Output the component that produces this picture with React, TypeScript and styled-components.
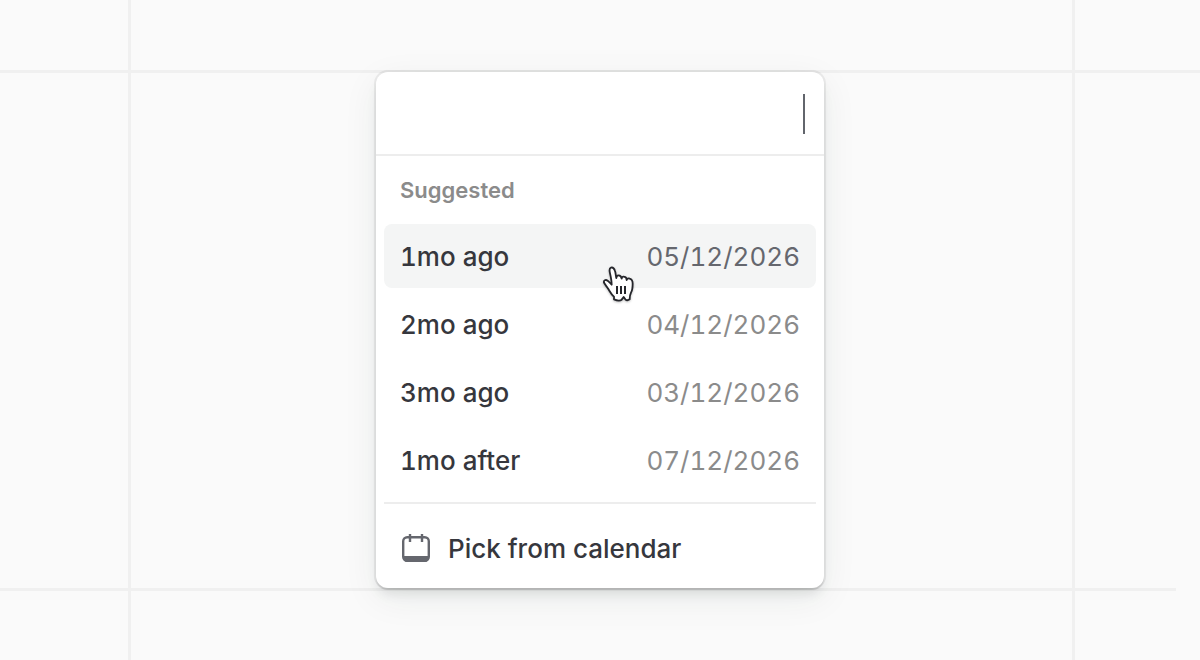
import React from "react";
import styled, { createGlobalStyle } from "styled-components";

const GlobalStyle = createGlobalStyle`
  *, *::before, *::after { box-sizing: border-box; }
  body {
    margin: 0;
    background: #fafafa;
    font-family: Inter, "Liberation Sans", sans-serif;
    -webkit-font-smoothing: antialiased;
  }
`;

const Page = styled.main`
  min-height: 100vh;
  padding: 70px 0 68px;
  background:
    linear-gradient(#f0f0f0, #f0f0f0) left 128px top / 3px 100% no-repeat,
    linear-gradient(#f0f0f0, #f0f0f0) right 125px top / 3px 100% no-repeat,
    #fafafa;
`;

const Band = styled.div`
  display: flex;
  justify-content: center;
  padding: 2px 0 3px;
  background:
    linear-gradient(#f0f0f0, #f0f0f0) left top / 100% 3px no-repeat,
    linear-gradient(#f0f0f0, #f0f0f0) left bottom / calc(100% - 24px) 3px no-repeat;
`;

const Card = styled.section`
  width: 448px;
  max-width: 100%;
  border-radius: 12px;
  background: #fff;
  box-shadow:
    0 0 0 2px rgba(0, 0, 0, 0.06),
    0 2px 1px rgba(0, 0, 0, 0.09),
    0 8px 12px -2px rgba(0, 0, 0, 0.09),
    0 10px 36px rgba(20, 50, 40, 0.07);
`;

const Field = styled.label`
  display: flex;
  align-items: center;
  height: 84px;
  padding: 2px 19px 0 24px;
  border-bottom: 2px solid #ededed;
`;

const DateInput = styled.input`
  flex: 1;
  min-width: 0;
  border: 0;
  outline: 0;
  padding: 0;
  background: transparent;
  color: #2f3037;
  font: 400 26px/32px Inter, sans-serif;
  text-align: right;
`;

const Caret = styled.span`
  width: 2px;
  height: 40px;
  background: #62656c;
`;

const Heading = styled.h2`
  margin: 0;
  padding: 18px 24px;
  color: #8b8b8b;
  font-size: 22px;
  line-height: 32px;
  font-weight: 600;
`;

const List = styled.ul`
  display: flex;
  flex-direction: column;
  gap: 4px;
  margin: 0;
  padding: 0 8px 10px;
  list-style: none;
`;

const Item = styled.li`
  position: relative;
`;

const Row = styled.button<{ $active?: boolean }>`
  display: flex;
  align-items: center;
  gap: 16px;
  width: 100%;
  height: 64px;
  padding: 2px 16px 0;
  border: 0;
  border-radius: 8px;
  background: ${(p) => (p.$active ? "#f4f5f5" : "transparent")};
  color: #36373d;
  font: 500 26px/32px Inter, sans-serif;
  font-variant-numeric: tabular-nums;
  text-align: left;
  cursor: pointer;
`;

const DateText = styled.time<{ $active?: boolean }>`
  margin-left: auto;
  color: ${(p) => (p.$active ? "#65676e" : "#8b8b8b")};
  font-weight: 400;
`;

const Footer = styled.div`
  margin: 0 8px;
  padding: 12px 0 8px;
  border-top: 2px solid #ededed;
`;

const Pointer = styled.svg`
  position: absolute;
  left: 218px;
  top: 41px;
  pointer-events: none;
  filter: drop-shadow(0 1px 1px rgba(0, 0, 0, 0.25));
`;

const CalendarIcon = () => (
  <svg width="32" height="32" viewBox="0 1 32 32" fill="none" aria-hidden="true">
    <rect x="3.2" y="5.2" width="25.6" height="23.6" rx="4" stroke="#65676e" strokeWidth="2.4" />
    <path d="M3 24h26v1.5a4.5 4.5 0 0 1-4.5 4.5h-17A4.5 4.5 0 0 1 3 25.5z" fill="#65676e" />
    <path d="M10 2v8M22 2v8" stroke="#65676e" strokeWidth="2.4" />
  </svg>
);

const HandPointer = () => (
  <Pointer width="34" height="38" viewBox="21 15 102 114" aria-hidden="true">
    <path
      d="M57 118 V110 C49 104 46 97 40 87 C36 80 29 73 27 68 C25 61 32 58 38 62 C42 65 45 69 50 74 C50 64 48 53 45 40 C43 32 42 25 48 23 C54 21 58 26 60 33 C62 39 62 45 64 54 C64 49 66 46 71 46 C77 46 79 51 80 56 C80 51 83 49 87 50 C93 51 95 55 95 60 C96 56 100 54 104 56 C111 58 113 64 113 71 C113 84 112 91 108 98 C105 104 104 108 104 118 C100 121 94 121 91 118 L86 111 L80 119 C75 123 64 121 57 118 Z"
      fill="#fff"
      stroke="#25262b"
      strokeWidth="5.5"
      strokeLinejoin="round"
    />
    <path d="M66 78v24M78 78v24M90 78v24" stroke="#25262b" strokeWidth="6" />
  </Pointer>
);

const suggestions = [
  { label: "1mo ago", date: "05/12/2026", iso: "2026-05-12", active: true },
  { label: "2mo ago", date: "04/12/2026", iso: "2026-04-12", active: false },
  { label: "3mo ago", date: "03/12/2026", iso: "2026-03-12", active: false },
  { label: "1mo after", date: "07/12/2026", iso: "2026-07-12", active: false },
];

export default function App() {
  return (
    <>
      <GlobalStyle />
      <Page>
        <Band>
          <Card>
            <Field>
              <DateInput type="text" aria-label="Date" />
              <Caret />
            </Field>
            <Heading>Suggested</Heading>
            <List>
              {suggestions.map((s) => (
                <Item key={s.iso}>
                  <Row type="button" $active={s.active}>
                    {s.label}
                    <DateText dateTime={s.iso} $active={s.active}>
                      {s.date}
                    </DateText>
                  </Row>
                  {s.active && <HandPointer />}
                </Item>
              ))}
            </List>
            <Footer>
              <Row type="button">
                <CalendarIcon />
                Pick from calendar
              </Row>
            </Footer>
          </Card>
        </Band>
      </Page>
    </>
  );
}
